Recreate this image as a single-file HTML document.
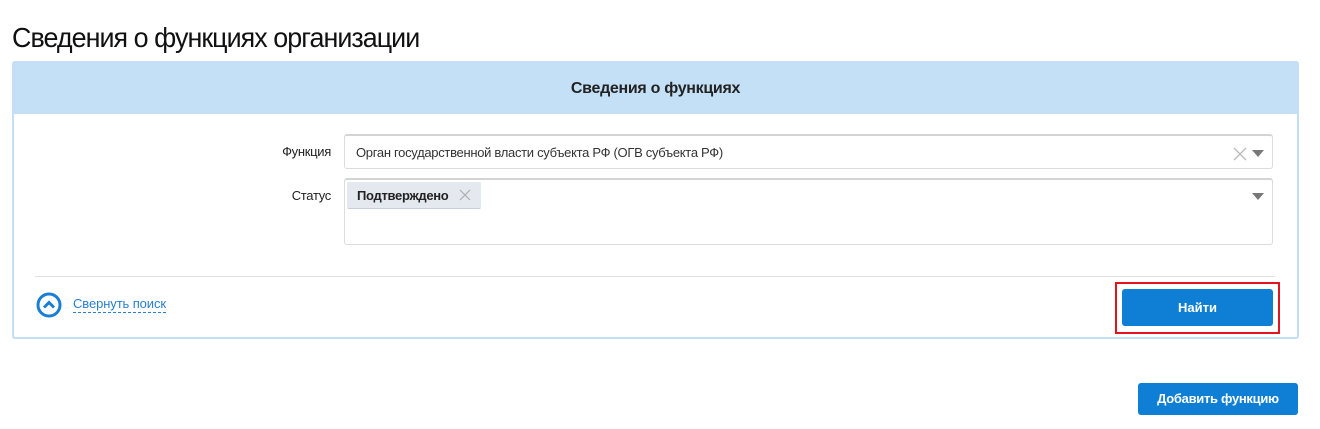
<!DOCTYPE html>
<html><head><meta charset="utf-8"><style>
body{margin:0;width:1320px;height:429px;background:#fff;font-family:"Liberation Sans",sans-serif;position:relative;overflow:hidden;color:#222}
.a{position:absolute}
.t{left:12px;top:22px;font-size:28px;letter-spacing:-1px;color:#111;transform:scaleX(.96);transform-origin:left}
.panel{left:12px;top:61px;width:1283px;height:274px;border:2px solid #c4dff5;border-radius:3px}
.hdr{left:0;top:0;width:1283px;height:51px;background:#c4e0f6;text-align:center;line-height:51px;font-size:16px;font-weight:bold;letter-spacing:-.3px;color:#222}
.lbl{font-size:13px;text-align:right;width:120px;letter-spacing:-.3px}
.box{border:1px solid #dcdcdc;border-top:2px solid #d4d4d4;border-radius:3px;background:#fff}
.btn{background:#0f7fd6;color:#fff;font-weight:bold;text-align:center;border-radius:3px;font-size:13px}
.tri{width:0;height:0;border-left:6px solid transparent;border-right:6px solid transparent;border-top:7px solid #777}
</style></head><body>
<div class="a t">Сведения о функциях организации</div>
<div class="a panel">
 <div class="a hdr">Сведения о функциях</div>
</div>
<div class="a lbl" style="left:211px;top:144px">Функция</div>
<div class="a box" style="left:344px;top:134px;width:927px;height:32px"></div>
<div class="a" style="left:356px;top:145px;font-size:13px;letter-spacing:-.3px;color:#333">Орган государственной власти субъекта РФ (ОГВ субъекта РФ)</div>
<svg class="a" style="left:1233px;top:147px" width="14" height="14"><path d="M1 1L13 13M13 1L1 13" stroke="#bbb" stroke-width="1.3"/></svg>
<div class="a tri" style="left:1252px;top:150px"></div>
<div class="a lbl" style="left:211px;top:188px">Статус</div>
<div class="a box" style="left:344px;top:178px;width:927px;height:64px"></div>
<div class="a" style="left:347px;top:182px;width:134px;height:26px;background:#e4e9f0;border-bottom:1px solid #c9d0da;border-radius:2px"></div>
<div class="a" style="left:357px;top:188px;font-size:13px;font-weight:bold;letter-spacing:-.3px">Подтверждено</div>
<svg class="a" style="left:459px;top:189px" width="12" height="12"><path d="M1 1L11 11M11 1L1 11" stroke="#aaa" stroke-width="1.1"/></svg>
<div class="a tri" style="left:1252px;top:193px"></div>
<div class="a" style="left:35px;top:276px;width:1240px;height:1px;background:#e0e0e0"></div>
<svg class="a" style="left:36px;top:292px" width="26" height="26"><circle cx="13" cy="13" r="11" fill="none" stroke="#1a7fd4" stroke-width="3"/><path d="M8 15.5L13 10.5L18 15.5" fill="none" stroke="#1a7fd4" stroke-width="3"/></svg>
<div class="a" style="left:73px;top:296px;font-size:13px;color:#2a7fd0;border-bottom:1px dashed #2a7fd0;letter-spacing:-.1px;line-height:16px">Свернуть поиск</div>
<div class="a" style="left:1115px;top:282px;width:161px;height:48px;border:2px solid #e2151e"></div>
<div class="a btn" style="left:1122px;top:289px;width:151px;height:37px;line-height:37px">Найти</div>
<div class="a btn" style="left:1138px;top:383px;width:160px;height:32px;line-height:32px;letter-spacing:-.3px">Добавить функцию</div>
</body></html>
